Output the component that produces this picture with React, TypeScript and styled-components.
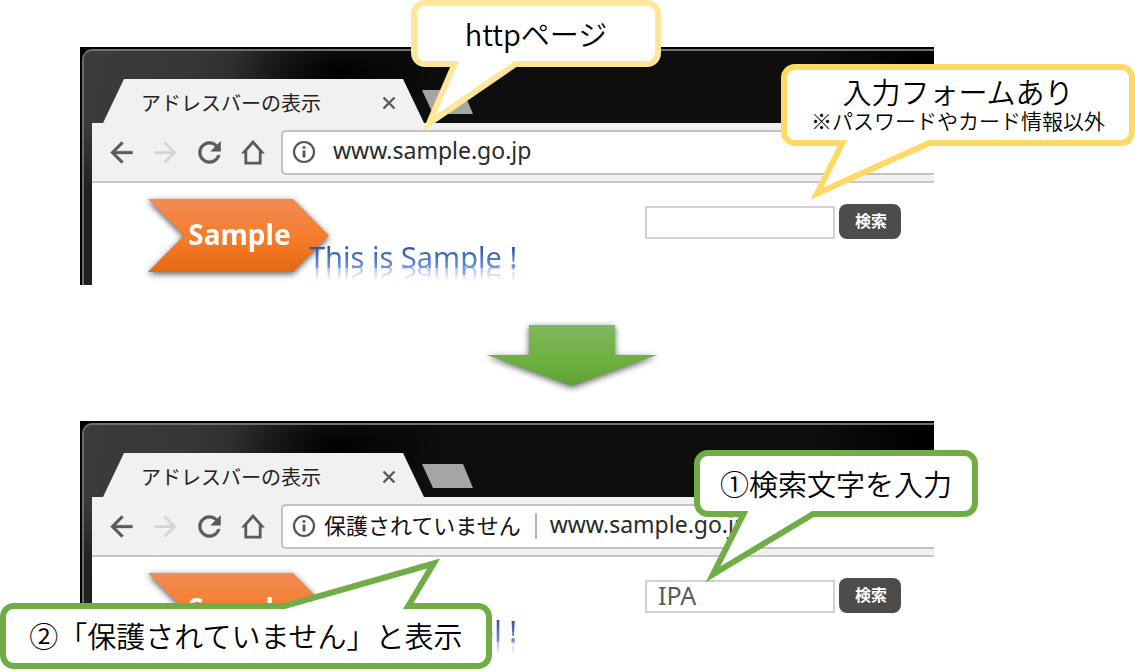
import React from "react";
import styled, { createGlobalStyle } from "styled-components";

const GlobalStyle = createGlobalStyle`
  *, *::before, *::after { box-sizing: border-box; }
  body {
    margin: 0;
    background: #fff;
    color: #000;
    font-family: "Noto Sans", "Noto Sans CJK JP", sans-serif;
  }
  button, input { font: inherit; margin: 0; padding: 0; border: 0; }
`;

const Stage = styled.main`
  position: relative;
  overflow: hidden;
  padding: 47px 201px 13px 80px;
`;

const Browser = styled.section`
  overflow: hidden;
  padding: 2px 0 0 2px;
  background: #000;
`;

const Frame = styled.div`
  padding-left: 8px;
  border-top: 2px solid #707070;
  border-left: 2px solid #6a6a6a;
  border-top-left-radius: 10px;
  background:
    radial-gradient(ellipse 110px 50px at 255px 22px, #000 0%, transparent 100%),
    linear-gradient(180deg, transparent 72px, rgba(0, 0, 0, 0.45) 140px),
    linear-gradient(100deg, #3c3c3c 0, #363636 110px, #282828 190px, #0e0e0e 320px, #0e0e0e 720px, #000 830px);
`;

const TabStrip = styled.div`
  display: flex;
  align-items: flex-end;
  height: 72px;
  padding-left: 11px;
`;

const Tab = styled.div`
  display: flex;
  align-items: center;
  justify-content: space-between;
  width: 321px;
  height: 44px;
  padding: 4px 25px 0 38px;
  background: #f1f1f1;
  clip-path: polygon(21px 0, 300px 0, 100% 100%, 0 100%);
`;

const TabTitle = styled.span`
  color: #222;
  font-family: "Noto Sans CJK JP", sans-serif;
  font-size: 20px;
  line-height: 28px;
  white-space: nowrap;
`;

const IconButton = styled.button<{ $muted?: boolean }>`
  display: flex;
  align-items: center;
  justify-content: center;
  width: 44px;
  height: 44px;
  background: none;
  color: ${(p) => (p.$muted ? "#d4d4d4" : "#5a5a5a")};
`;

const CloseButton = styled(IconButton)`
  width: 20px;
  height: 20px;
`;

const NewTab = styled.button`
  width: 51px;
  height: 24px;
  margin-bottom: 9px;
  margin-left: -2px;
  background: #a5a5a5;
  clip-path: polygon(0 0, 41px 0, 100% 100%, 11px 100%);
`;

const Toolbar = styled.div`
  display: flex;
  align-items: center;
  height: 60px;
  padding-left: 7px;
  border-bottom: 2px solid #c8c8c8;
  background: #f1f1f1;
`;

const AddressBar = styled.div`
  display: flex;
  flex: 1;
  align-items: center;
  min-width: 0;
  height: 45px;
  margin-left: 6px;
  padding-left: 8px;
  border: 2px solid #c2c2c2;
  border-right: 0;
  border-radius: 5px 0 0 5px;
  background: #fff;
  color: #555;
`;

const SecurityNote = styled.span`
  margin-left: 7px;
  padding: 0 14px 4px 0;
  border-right: 2px solid #b4b4b4;
  color: #111;
  font-family: "Noto Sans CJK JP", sans-serif;
  font-size: 22px;
  line-height: 22px;
  white-space: nowrap;
`;

const UrlInput = styled.input<{ $wide?: boolean }>`
  flex: 1;
  min-width: 0;
  height: 36px;
  margin-left: ${(p) => (p.$wide ? "16px" : "13px")};
  padding-bottom: 4px;
  background: none;
  color: #2a2a2a;
  font-size: 23px;
  outline: 0;
`;

const Content = styled.div`
  display: flex;
  align-items: flex-start;
  height: 102px;
  padding: 16px 33px 0 56px;
  background: #fff;
`;

const LogoShadow = styled.div`
  filter: drop-shadow(0 2px 3px rgba(0, 0, 0, 0.65));
`;

const Logo = styled.div`
  width: 181px;
  height: 73px;
  padding-left: 2px;
  background: linear-gradient(180deg, #f18c56 0%, #f67d2b 50%, #e56913 100%);
  clip-path: polygon(0 0, 145px 0, 100% 50%, 145px 100%, 0 100%, 36px 50%);
  color: #fff;
  font-size: 28px;
  font-weight: 700;
  line-height: 70px;
  text-align: center;
`;

const Slogan = styled.p`
  z-index: 1;
  width: 208px;
  height: 36px;
  margin: 40px 0 0 -20px;
  background: linear-gradient(180deg, #2f5597 20%, #4472c4 50%, #7ba0e4 90%);
  background-clip: text;
  -webkit-background-clip: text;
  color: transparent;
  font-size: 29px;
  line-height: 36px;
  text-align: right;
  white-space: nowrap;
  -webkit-box-reflect: below -16px
    linear-gradient(180deg, transparent 40%, rgba(0, 0, 0, 0.55) 78%, transparent 79%);
`;

const SearchForm = styled.form`
  display: flex;
  gap: 4px;
  margin: 5px 0 0 auto;
`;

const SearchInput = styled.input`
  width: 190px;
  height: 33px;
  margin-top: 2px;
  padding: 0 11px 4px;
  border: 2px solid #d2d2d2;
  background: #fff;
  color: #595959;
  font-size: 25px;
  outline: 0;
`;

const SearchButton = styled.button`
  width: 62px;
  height: 35px;
  padding: 0 0 3px 2px;
  border-radius: 8px;
  background: #4c4c4c;
  color: #fff;
  font-family: "Noto Sans CJK JP", sans-serif;
  font-size: 16px;
  font-weight: 700;
  line-height: 20px;
`;

const DownArrow = styled.svg`
  display: block;
  overflow: visible;
  margin: 39px 0 35px 407px;
  filter: drop-shadow(0 2px 3px rgba(0, 0, 0, 0.6));
`;

const Bubble = styled.aside<{
  $color: string;
  $top: number;
  $width: number;
  $height: number;
  $left?: number;
  $right?: number;
}>`
  position: absolute;
  z-index: 2;
  top: ${(p) => p.$top}px;
  ${(p) => (p.$left !== undefined ? `left: ${p.$left}px;` : `right: ${p.$right}px;`)}
  display: flex;
  flex-direction: column;
  align-items: center;
  justify-content: center;
  width: ${(p) => p.$width}px;
  height: ${(p) => p.$height}px;
  padding-bottom: 2px;
  border: 6px solid ${(p) => p.$color};
  border-radius: 14px;
  background: #fff;
  font-family: "Noto Sans CJK JP", sans-serif;
  font-weight: 350;
  white-space: nowrap;
`;

const BubbleText = styled.p`
  margin: 0;
  font-size: 29px;
  line-height: 32px;
`;

const BubbleNote = styled.p`
  margin: 0;
  font-size: 21px;
  line-height: 26px;
`;

const Tail = styled.svg<{ $up?: boolean; $left: number }>`
  position: absolute;
  left: ${(p) => p.$left}px;
  ${(p) => (p.$up ? "bottom: 100%;" : "top: 100%;")}
  overflow: hidden;
`;

type TailProps = { color: string; left: number; width: number; height: number; d: string; up?: boolean };

function BubbleTail({ color, left, width, height, d, up }: TailProps) {
  return (
    <Tail $left={left} $up={up} width={width} height={height} aria-hidden="true">
      <path d={d} fill="#fff" stroke={color} strokeWidth="6" strokeMiterlimit="20" />
    </Tail>
  );
}

type WindowProps = { id: string; slogan: string; warning?: string; query?: string };

function BrowserWindow({ id, slogan, warning, query }: WindowProps) {
  return (
    <Browser>
      <Frame>
        <TabStrip>
          <Tab>
            <TabTitle>アドレスバーの表示</TabTitle>
            <CloseButton type="button" aria-label="タブを閉じる">
              <svg width="14" height="14" viewBox="0 0 14 14" stroke="currentColor" strokeWidth="2.4">
                <path d="M1.5 1.5l11 11M12.5 1.5l-11 11" />
              </svg>
            </CloseButton>
          </Tab>
          <NewTab type="button" aria-label="新しいタブ" />
        </TabStrip>
        <Toolbar>
          <IconButton type="button" aria-label="戻る">
            <svg width="33" height="33" viewBox="0 0 24 24" fill="currentColor" stroke="currentColor" strokeWidth="0.3">
              <path d="M20 11H7.83l5.59-5.59L12 4l-8 8 8 8 1.41-1.41L7.83 13H20v-2z" />
            </svg>
          </IconButton>
          <IconButton type="button" aria-label="進む" $muted disabled>
            <svg width="33" height="33" viewBox="0 0 24 24" fill="currentColor">
              <path d="M12 4l-1.41 1.41L16.17 11H4v2h12.17l-5.58 5.59L12 20l8-8z" />
            </svg>
          </IconButton>
          <IconButton type="button" aria-label="再読み込み">
            <svg width="33" height="33" viewBox="0 0 24 24" fill="currentColor" stroke="currentColor" strokeWidth="0.4">
              <path d="M17.65 6.35C16.2 4.9 14.21 4 12 4c-4.42 0-7.99 3.58-7.99 8s3.57 8 7.99 8c3.73 0 6.84-2.55 7.73-6h-2.08c-.82 2.33-3.04 4-5.65 4-3.31 0-6-2.69-6-6s2.69-6 6-6c1.66 0 3.14.69 4.22 1.78L13 11h7V4l-2.35 2.35z" />
            </svg>
          </IconButton>
          <IconButton type="button" aria-label="ホーム">
            <svg width="26" height="26" viewBox="0 0 26 26" fill="none" stroke="currentColor" strokeWidth="2.8">
              <path d="M13 3L4.2 13h1.6v11.2h14.4V13h1.6z" />
            </svg>
          </IconButton>
          <AddressBar>
            <svg width="26" height="26" viewBox="0 0 26 26" fill="none" stroke="currentColor" strokeWidth="2.2">
              <circle cx="13" cy="13" r="10" />
              <path d="M13 11.6v7M13 7.2v2.6" strokeWidth="2.8" />
            </svg>
            {warning && <SecurityNote>{warning}</SecurityNote>}
            <UrlInput $wide={!warning} type="text" aria-label="アドレス" defaultValue="www.sample.go.jp" />
          </AddressBar>
        </Toolbar>
        <Content>
          <LogoShadow>
            <Logo>Sample</Logo>
          </LogoShadow>
          <Slogan>{slogan}</Slogan>
          <SearchForm onSubmit={(e: React.FormEvent) => e.preventDefault()}>
            <SearchInput id={id} type="text" aria-label="検索文字" defaultValue={query} />
            <SearchButton type="submit">検索</SearchButton>
          </SearchForm>
        </Content>
      </Frame>
    </Browser>
  );
}

const PALE = "#ffe699";
const GOLD = "#ffd966";
const GREEN = "#70ad47";

export default function App() {
  return (
    <>
      <GlobalStyle />
      <Stage>
        <BrowserWindow id="search-before" slogan="This is Sample !" />
        <DownArrow width="170" height="62" viewBox="0 0 170 62" aria-hidden="true">
          <defs>
            <linearGradient id="leaf" x1="0" y1="0" x2="0" y2="1">
              <stop offset="0" stopColor="#81b861" />
              <stop offset="0.5" stopColor="#6fb242" />
              <stop offset="1" stopColor="#61a235" />
            </linearGradient>
          </defs>
          <path d="M42 1h86v30h42L85 62 0 31h42z" fill="url(#leaf)" />
        </DownArrow>
        <BrowserWindow id="search-after" slogan="This is Sampl !" warning="保護されていません" query="IPA" />

        <Bubble $color={PALE} $top={0} $left={411} $width={250} $height={67}>
          <BubbleText>httpページ</BubbleText>
          <BubbleTail color={PALE} left={0} width={120} height={76} d="M43.3 -10L12 62.3L117.6 -10" />
        </Bubble>

        <Bubble $color={GOLD} $top={64} $right={0} $width={354} $height={82}>
          <BubbleText>入力フォームあり</BubbleText>
          <BubbleNote>※パスワードやカード情報以外</BubbleNote>
          <BubbleTail color={GOLD} left={20} width={150} height={66} d="M42 -10L10 53.5L151 -10" />
        </Bubble>

        <Bubble $color={GREEN} $top={450} $right={157} $width={284} $height={67}>
          <BubbleText>①検索文字を入力</BubbleText>
          <BubbleTail color={GREEN} left={0} width={150} height={76} d="M50 -10L13 63.3L134.6 -10" />
        </Bubble>

        <Bubble $color={GREEN} $top={603} $left={0} $width={492} $height={66}>
          <BubbleText>②「保護されていません」と表示</BubbleText>
          <BubbleTail color={GREEN} up left={234} width={210} height={56} d="M-1 66L193.7 10.5L160.5 66" />
        </Bubble>
      </Stage>
    </>
  );
}
